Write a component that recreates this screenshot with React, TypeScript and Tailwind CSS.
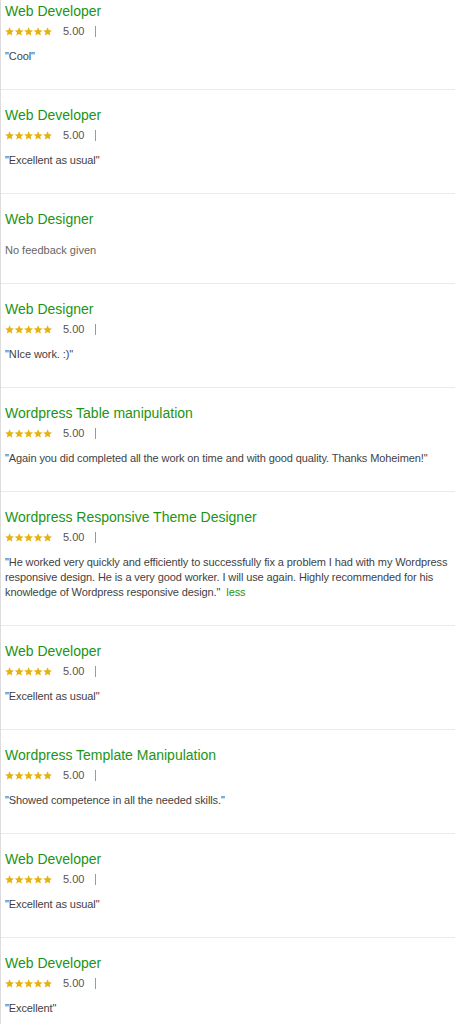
import React from "react";

type Review = {
  title: string;
  rating?: string;
  comment?: string;
  more?: boolean;
};

const reviews: Review[] = [
  { title: "Web Developer", rating: "5.00", comment: "\"Cool\"" },
  { title: "Web Developer", rating: "5.00", comment: "\"Excellent as usual\"" },
  { title: "Web Designer" },
  { title: "Web Designer", rating: "5.00", comment: "\"NIce work. :)\"" },
  {
    title: "Wordpress Table manipulation",
    rating: "5.00",
    comment: "\"Again you did completed all the work on time and with good quality. Thanks Moheimen!\"",
  },
  {
    title: "Wordpress Responsive Theme Designer",
    rating: "5.00",
    comment:
      "\"He worked very quickly and efficiently to successfully fix a problem I had with my Wordpress responsive design. He is a very good worker. I will use again. Highly recommended for his knowledge of Wordpress responsive design.\"",
    more: true,
  },
  { title: "Web Developer", rating: "5.00", comment: "\"Excellent as usual\"" },
  {
    title: "Wordpress Template Manipulation",
    rating: "5.00",
    comment: "\"Showed competence in all the needed skills.\"",
  },
  { title: "Web Developer", rating: "5.00", comment: "\"Excellent as usual\"" },
  { title: "Web Developer", rating: "5.00", comment: "\"Excellent\"" },
];

const STAR = "M4.6 0.3l1.3 2.85 3.1.3-2.35 2.1.7 3.05L4.6 7.05 1.85 8.6l.7-3.05L.2 3.45l3.1-.3z";

function Stars() {
  return (
    <svg width="48" height="9" viewBox="0 0 48 9" className="block">
      {[0, 1, 2, 3, 4].map((i) => (
        <path key={i} d={STAR} transform={`translate(${i * 9.5} 0)`} fill="#e6b30e" />
      ))}
    </svg>
  );
}

function ReviewItem({ review, first }: { review: Review; first: boolean }) {
  return (
    <div className={`${first ? "pt-px" : "pt-[15px] border-t border-[#e9ebe9]"} pb-[25px] pl-1`}>
      <h3 className="text-[14px] leading-5 text-[#1d9414]">{review.title}</h3>
      {review.rating ? (
        <>
          <div className="flex items-center h-5">
            <Stars />
            <span className="ml-[10px] text-[11px] text-[#555]">{review.rating}</span>
            <span className="ml-[11px] w-px h-[11px] bg-[#9a9a9a]" />
          </div>
          <p className="mt-2 text-[11px] leading-[15px] tracking-[-0.1px] text-[#3f3f3f]">
            {review.comment}
            <span className="ml-1.5 text-[#1d9414]">{review.more ? "less" : ""}</span>
          </p>
        </>
      ) : (
        <p className="mt-[13px] text-[11px] leading-4 text-[#666]">No feedback given</p>
      )}
    </div>
  );
}

export default function App() {
  return (
    <div className="w-[455px] h-[1024px] overflow-hidden bg-white border-l border-[#dcdcdc]" style={{ fontFamily: '"Liberation Sans", Arial, sans-serif' }}>
      {reviews.map((r, i) => (
        <ReviewItem key={i} review={r} first={i === 0} />
      ))}
    </div>
  );
}
